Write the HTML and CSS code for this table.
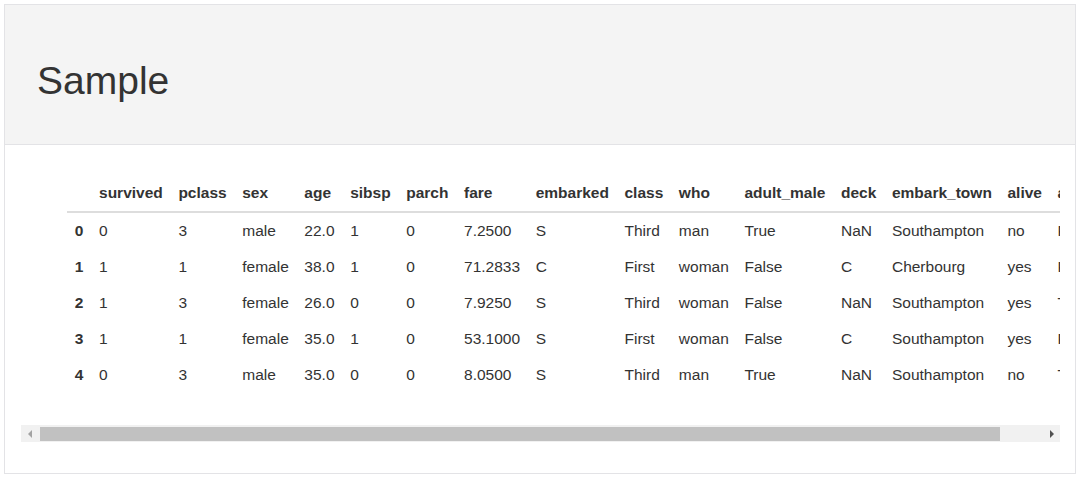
FILE: index.html
```html
<!DOCTYPE html>
<html>
<head>
<meta charset="utf-8">
<link rel="stylesheet" href="styles.css">
</head>
<body>
<div class="card">
  <div class="card-header"><h1 class="title">Sample</h1></div>
  <div class="card-body">
    <div class="scroller">
      <table class="df">
        <thead>
          <tr><th></th><th>survived</th><th>pclass</th><th>sex</th><th>age</th><th>sibsp</th><th>parch</th><th>fare</th><th>embarked</th><th>class</th><th>who</th><th>adult_male</th><th>deck</th><th>embark_town</th><th>alive</th><th>alone</th></tr>
        </thead>
        <tbody>
          <tr><th>0</th><td>0</td><td>3</td><td>male</td><td>22.0</td><td>1</td><td>0</td><td>7.2500</td><td>S</td><td>Third</td><td>man</td><td>True</td><td>NaN</td><td>Southampton</td><td>no</td><td>False</td></tr>
          <tr><th>1</th><td>1</td><td>1</td><td>female</td><td>38.0</td><td>1</td><td>0</td><td>71.2833</td><td>C</td><td>First</td><td>woman</td><td>False</td><td>C</td><td>Cherbourg</td><td>yes</td><td>False</td></tr>
          <tr><th>2</th><td>1</td><td>3</td><td>female</td><td>26.0</td><td>0</td><td>0</td><td>7.9250</td><td>S</td><td>Third</td><td>woman</td><td>False</td><td>NaN</td><td>Southampton</td><td>yes</td><td>True</td></tr>
          <tr><th>3</th><td>1</td><td>1</td><td>female</td><td>35.0</td><td>1</td><td>0</td><td>53.1000</td><td>S</td><td>First</td><td>woman</td><td>False</td><td>C</td><td>Southampton</td><td>yes</td><td>False</td></tr>
          <tr><th>4</th><td>0</td><td>3</td><td>male</td><td>35.0</td><td>0</td><td>0</td><td>8.0500</td><td>S</td><td>Third</td><td>man</td><td>True</td><td>NaN</td><td>Southampton</td><td>no</td><td>True</td></tr>
        </tbody>
      </table>
    </div>
    <div class="hscroll">
      <div class="hs-btn hs-left"><span class="arrow-left"></span></div>
      <div class="hs-track"><div class="hs-thumb"></div></div>
      <div class="hs-btn hs-right"><span class="arrow-right"></span></div>
    </div>
  </div>
</div>
</body>
</html>
```
FILE: styles.css
```css
html, body {
  margin: 0;
  padding: 0;
  background: #fff;
}
body {
  font-family: "Liberation Sans", Arial, sans-serif;
  color: #333;
}
.card {
  margin: 4px 4px 0 4px;
  border: 1px solid #e3e3e6;
}
.card-header {
  height: 139px;
  background: #f4f4f4;
  border-bottom: 1px solid #e3e3e6;
  display: flex;
  align-items: center;
  padding: 0 32px;
}
.title {
  margin: 0;
  font-weight: normal;
  font-size: 39px;
  line-height: 46px;
  color: #333;
  padding-top: 13px;
}
.card-body {
  padding: 30px 15px 31px 16px;
}
.scroller {
  overflow: hidden;
}
.df {
  border-collapse: collapse;
  border-spacing: 0;
  margin: 0 0 32px 46px;
  font-size: 15.5px;
  line-height: 20px;
  white-space: nowrap;
}
.df th, .df td {
  padding: 8px 7.8px;
  text-align: left;
  vertical-align: middle;
}
.df th {
  font-weight: bold;
  color: #333;
}
.df td {
  color: #333;
}
.df thead th {
  border-bottom: 2px solid #dddddd;
}
.hscroll {
  display: flex;
  height: 17px;
  background: #f1f1f1;
}
.hs-btn {
  width: 17px;
  flex: none;
  display: flex;
  align-items: center;
  justify-content: center;
}
.arrow-left {
  width: 0;
  height: 0;
  border-top: 4px solid transparent;
  border-bottom: 4px solid transparent;
  border-right: 4px solid #a3a3a3;
}
.arrow-right {
  width: 0;
  height: 0;
  border-top: 4px solid transparent;
  border-bottom: 4px solid transparent;
  border-left: 4px solid #505050;
}
.hs-track {
  flex: 1;
  display: flex;
  align-items: center;
}
.hs-thumb {
  width: 95.5%;
  height: 14px;
  margin-left: 2px;
  background: #c1c1c1;
}
```
